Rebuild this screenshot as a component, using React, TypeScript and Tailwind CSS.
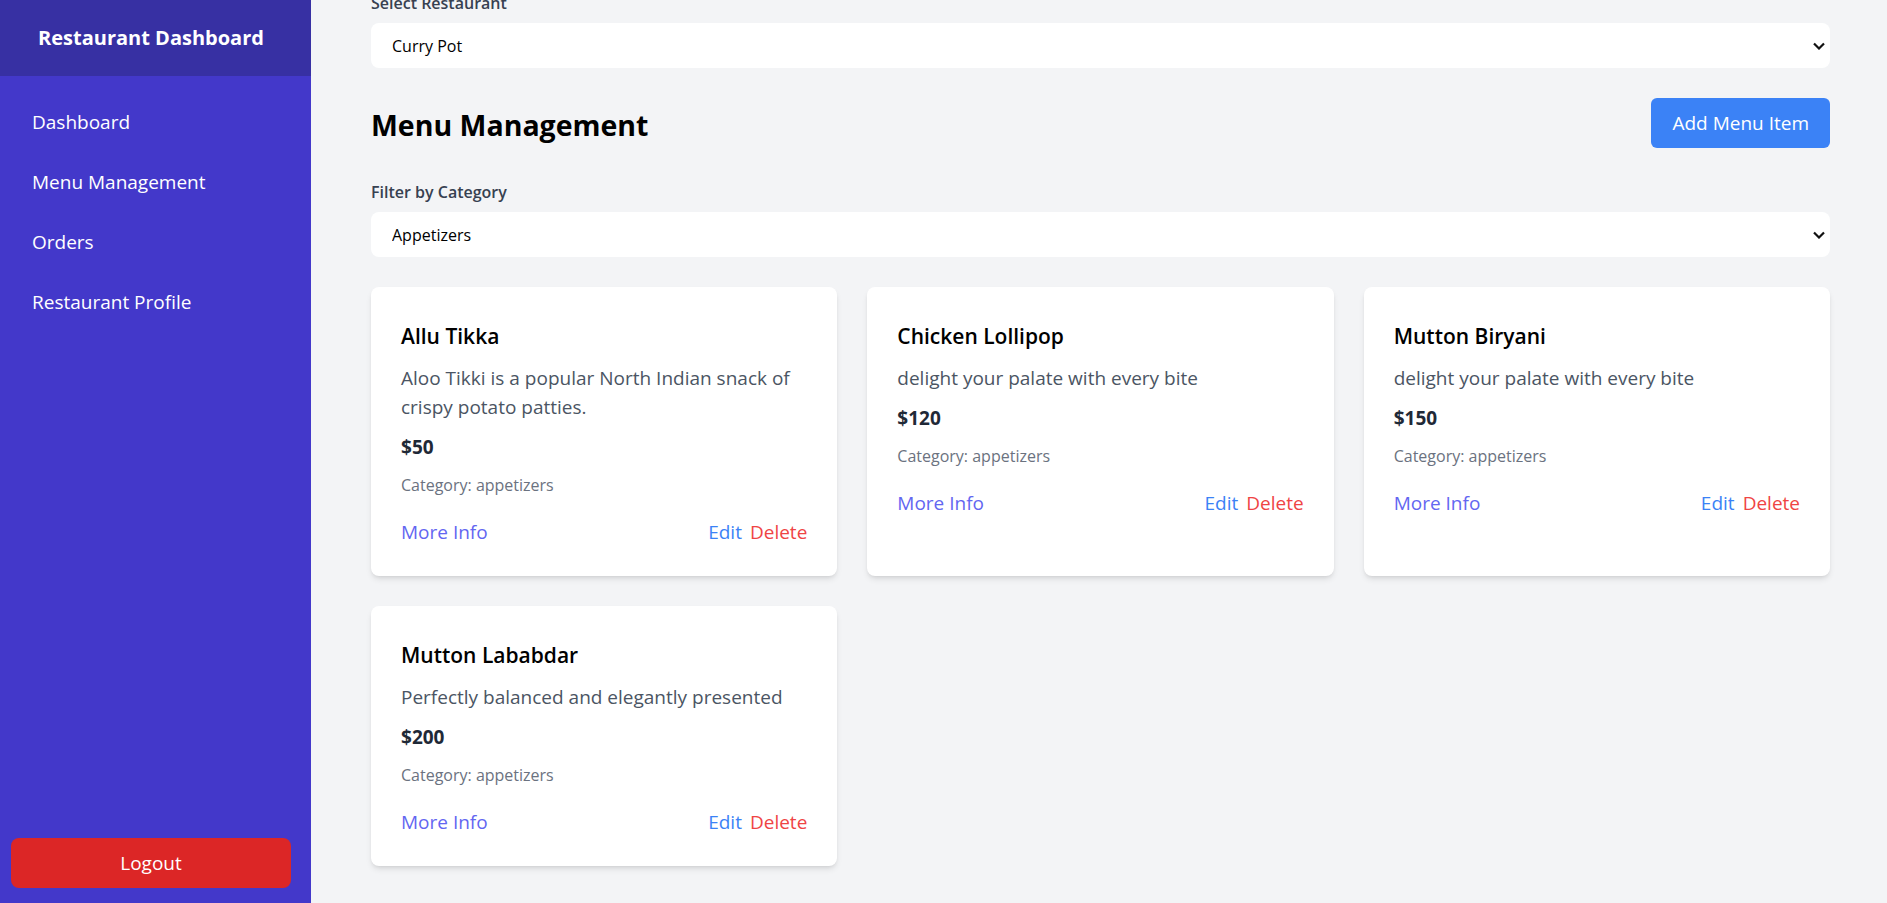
import React, { useState } from "react";

type MenuItem = {
  id: number;
  name: string;
  description: string;
  price: number;
  category: string;
};

const items: MenuItem[] = [
  {
    id: 1,
    name: "Allu Tikka",
    description: "Aloo Tikki is a popular North Indian snack of crispy potato patties.",
    price: 50,
    category: "appetizers",
  },
  { id: 2, name: "Chicken Lollipop", description: "delight your palate with every bite", price: 120, category: "appetizers" },
  { id: 3, name: "Mutton Biryani", description: "delight your palate with every bite", price: 150, category: "appetizers" },
  { id: 4, name: "Mutton Lababdar", description: "Perfectly balanced and elegantly presented", price: 200, category: "appetizers" },
];

const navLinks = ["Dashboard", "Menu Management", "Orders", "Restaurant Profile"];

const Chevron = () => (
  <svg
    width="12"
    height="8"
    viewBox="0 0 12 8"
    className="pointer-events-none absolute right-[5px] top-1/2 -translate-y-1/2"
  >
    <polyline points="1,1.5 6,6.5 11,1.5" fill="none" stroke="#111" strokeWidth="2.2" />
  </svg>
);

type SelectProps = {
  label: string;
  value: string;
  options: string[];
  onChange: (v: string) => void;
};
const SelectField = ({ label, value, options, onChange }: SelectProps) => (
  <div>
    <label className="block text-base leading-6 font-[550] text-[#374151] mb-2">{label}</label>
    <div className="relative">
      <select
        value={value}
        onChange={(e) => onChange(e.target.value)}
        className="appearance-none w-full h-[45px] bg-white rounded-lg px-[21px] text-base text-black outline-none"
      >
        {options.map((o) => (
          <option key={o}>{o}</option>
        ))}
      </select>
      <Chevron />
    </div>
  </div>
);

const MenuCard = ({ item }: { item: MenuItem }) => (
  <div className="bg-white rounded-lg shadow-md px-[30px] pt-[35px] pb-[30px]">
    <h3 className="text-[21px] leading-7 font-semibold text-black mb-[14px]">{item.name}</h3>
    <p className="text-[19px] leading-[29px] text-[#4b5563] mb-[11px]">{item.description}</p>
    <p className="text-[19px] leading-7 font-bold text-[#1f2937] mb-3">${item.price}</p>
    <p className="text-base leading-6 text-[#6b7280] mb-[21px]">Category: {item.category}</p>
    <div className="flex items-center justify-between text-[19px] leading-7">
      <button className="text-[#6366f1]">More Info</button>
      <div className="flex gap-2">
        <button className="text-[#3b82f6]">Edit</button>
        <button className="text-[#ef4444]">Delete</button>
      </div>
    </div>
  </div>
);

export default function App() {
  const [restaurant, setRestaurant] = useState("Curry Pot");
  const [category, setCategory] = useState("Appetizers");

  return (
    <div className="flex h-screen overflow-hidden bg-[#f3f4f6] font-['Open_Sans',sans-serif]">
      <aside className="w-[311px] shrink-0 bg-[#4338ca] text-white flex flex-col">
        <div className="h-[76px] bg-[#3730a3] flex items-center justify-center pr-[9px]">
          <h1 className="text-xl font-bold">Restaurant Dashboard</h1>
        </div>
        <nav className="p-4">
          {navLinks.map((l) => (
            <a key={l} href="#" className="block px-4 py-4 text-[19px] leading-7">
              {l}
            </a>
          ))}
        </nav>
        <div className="mt-auto pl-[11px] pb-[15px]">
          <button className="w-[280px] h-[50px] bg-[#dc2626] rounded-lg text-[19px]">Logout</button>
        </div>
      </aside>

      <main className="flex-1 pl-[60px] pr-[57px]">
        <div className="-mt-[9px]">
          <SelectField
            label="Select Restaurant"
            value={restaurant}
            options={["Curry Pot", "Spice Garden"]}
            onChange={setRestaurant}
          />
        </div>

        <div className="flex items-center justify-between mt-[30px] mb-8">
          <h2 className="text-[28.5px] leading-9 pt-[4px] font-bold text-black">Menu Management</h2>
          <button className="h-[50px] px-[21px] bg-[#3b82f6] text-white text-[19px] rounded-md">Add Menu Item</button>
        </div>

        <SelectField
          label="Filter by Category"
          value={category}
          options={["All", "Appetizers", "Main Course", "Desserts"]}
          onChange={setCategory}
        />

        <div className="grid grid-cols-3 gap-[30px] mt-[30px]">
          {items.map((it) => (
            <MenuCard key={it.id} item={it} />
          ))}
        </div>
      </main>
    </div>
  );
}
